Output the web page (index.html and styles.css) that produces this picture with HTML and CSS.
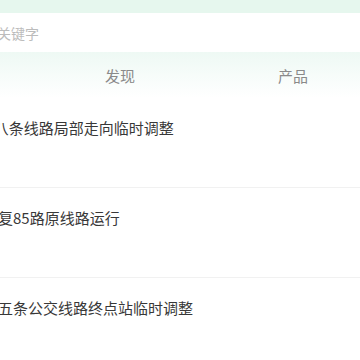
FILE: index.html
```html
<!DOCTYPE html>
<html lang="zh">
<head>
<meta charset="utf-8">
<link rel="stylesheet" href="styles.css">
</head>
<body>
<div class="page">
  <header class="top">
    <div class="search"><span class="placeholder">搜索关键字</span></div>
  </header>
  <nav class="tabs">
    <span class="tab">发现</span>
    <span class="tab">产品</span>
  </nav>
  <ul class="list">
    <li class="item"><span class="title">N八条线路局部走向临时调整</span></li>
    <li class="item"><span class="title">恢复85路原线路运行</span></li>
    <li class="item"><span class="title">这五条公交线路终点站临时调整</span></li>
  </ul>
</div>
</body>
</html>
```
FILE: styles.css
```css
html, body {
  margin: 0;
  padding: 0;
  background: #fff;
}
.page {
  width: 360px;
  height: 360px;
  overflow: hidden;
  font-family: "Noto Sans CJK SC", "Noto Sans", sans-serif;
}
.top {
  background: #e6f7ee;
  padding-top: 13px;
}
.search {
  height: 39px;
  background: #fff;
  display: flex;
  align-items: center;
  white-space: nowrap;
}
.placeholder {
  font-size: 14px;
  color: #bcbcbc;
  margin-left: -31px;
  line-height: 20px;
}
.tabs {
  height: 46px;
  background: linear-gradient(#eef9f4, #ffffff);
  display: flex;
  align-items: center;
  padding-left: 105px;
  gap: 143px;
  box-sizing: border-box;
  padding-top: 1px;
}
.tab {
  font-size: 15px;
  color: #8a8a8a;
  line-height: 20px;
}
.list {
  list-style: none;
  margin: 0;
  padding: 0;
}
.item {
  height: 90px;
  box-sizing: border-box;
  border-bottom: 1px solid #f1f1f1;
  padding-top: 20px;
  white-space: nowrap;
}
.title {
  display: block;
  font-size: 15px;
  line-height: 20px;
  color: #383838;
  margin-left: -17px;
}
```
